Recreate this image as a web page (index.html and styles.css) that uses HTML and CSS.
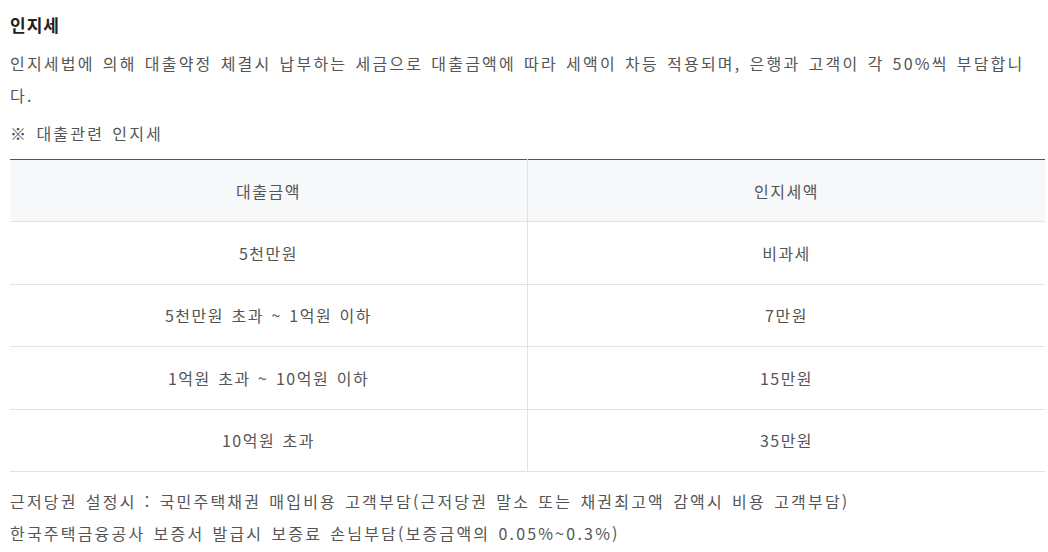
FILE: index.html
```html
<!DOCTYPE html>
<html lang="ko">
<head>
<meta charset="utf-8">
<link rel="stylesheet" href="styles.css">
</head>
<body>
<div class="page">
  <h3 class="title">인지세</h3>
  <p class="desc">인지세법에 의해 대출약정 체결시 납부하는 세금으로 대출금액에 따라 세액이 차등 적용되며, 은행과 고객이 각 50%씩 부담합니다.</p>
  <p class="note"><span class="mark">※</span> 대출관련 인지세</p>
  <table class="tax">
    <thead>
      <tr><th>대출금액</th><th>인지세액</th></tr>
    </thead>
    <tbody>
      <tr><td>5천만원</td><td>비과세</td></tr>
      <tr><td>5천만원 초과 ~ 1억원 이하</td><td>7만원</td></tr>
      <tr><td>1억원 초과 ~ 10억원 이하</td><td>15만원</td></tr>
      <tr><td>10억원 초과</td><td>35만원</td></tr>
    </tbody>
  </table>
  <ul class="foot">
    <li>근저당권 설정시 : 국민주택채권 매입비용 고객부담(근저당권 말소 또는 채권최고액 감액시 비용 고객부담)</li>
    <li>한국주택금융공사 보증서 발급시 보증료 손님부담(보증금액의 0.05%~0.3%)</li>
  </ul>
</div>
</body>
</html>
```
FILE: styles.css
```css
* { box-sizing: border-box; }
html, body { margin: 0; padding: 0; background: #fff; }
body {
  font-family: "Noto Sans CJK KR", "Noto Sans", sans-serif;
  font-size: 16px;
  color: #555;
  letter-spacing: 2.2px;
  word-spacing: 1.5px;
}
.page {
  width: 1048px;
  padding: 9px 3px 0 10px;
}
.title {
  margin: 0;
  font-size: 17px;
  line-height: 32px;
  font-weight: 700;
  color: #222;
  letter-spacing: 1px;
}
.desc {
  margin: 6px 0 0;
  line-height: 32px;
}
.note {
  margin: 6px 0 0;
  line-height: 32px;
}
.mark { font-weight: 700; color: #444; }
.tax {
  width: 100%;
  margin-top: 10px;
  border-collapse: collapse;
  border-top: 1px solid #555;
  table-layout: fixed;
}
.tax th, .tax td {
  height: 62.4px;
  padding: 0;
  text-align: center;
  vertical-align: middle;
  font-weight: 400;
  color: #555;
  border-bottom: 1px solid #e2e2e2;
  letter-spacing: 1.5px;
}
.tax th + th, .tax td + td { border-left: 1px solid #e2e2e2; }
.tax th { background: #f7f8fa; }
.foot {
  list-style: none;
  margin: 13px 0 0;
  padding: 0;
}
.foot li { line-height: 32px; }
```
